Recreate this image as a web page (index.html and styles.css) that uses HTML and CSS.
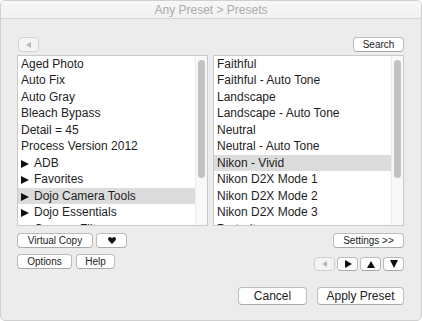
FILE: index.html
```html
<!DOCTYPE html>
<html>
<head>
    <title>Any Preset &gt; Presets</title>
    <link rel="stylesheet" href="styles.css">
</head>
<body>
    <div class="window">
        <div class="titlebar">Any Preset &gt; Presets</div>

        <div class="content">
            <div class="toolbar">
                <button class="btn back-btn disabled"><span class="tri tri-left"></span></button>
                <button class="btn">Search</button>
            </div>

            <div class="lists">
                <div class="list left-list">
                    <div class="items">
                        <div class="row">Aged Photo</div>
                        <div class="row">Auto Fix</div>
                        <div class="row">Auto Gray</div>
                        <div class="row">Bleach Bypass</div>
                        <div class="row">Detail = 45</div>
                        <div class="row">Process Version 2012</div>
                        <div class="row folder"><span class="tri tri-right"></span>ADB</div>
                        <div class="row folder"><span class="tri tri-right"></span>Favorites</div>
                        <div class="row folder selected"><span class="tri tri-right"></span>Dojo Camera Tools</div>
                        <div class="row folder"><span class="tri tri-right"></span>Dojo Essentials</div>
                        <div class="row folder"><span class="tri tri-right"></span>Camera Filters</div>
                    </div>
                    <div class="track"><div class="thumb"></div></div>
                </div>

                <div class="list right-list">
                    <div class="items">
                        <div class="row">Faithful</div>
                        <div class="row">Faithful - Auto Tone</div>
                        <div class="row">Landscape</div>
                        <div class="row">Landscape - Auto Tone</div>
                        <div class="row">Neutral</div>
                        <div class="row">Neutral - Auto Tone</div>
                        <div class="row selected">Nikon - Vivid</div>
                        <div class="row">Nikon D2X Mode 1</div>
                        <div class="row">Nikon D2X Mode 2</div>
                        <div class="row">Nikon D2X Mode 3</div>
                        <div class="row">Portrait</div>
                    </div>
                    <div class="track"><div class="thumb"></div></div>
                </div>
            </div>

            <div class="controls">
                <div class="left-controls">
                    <div class="btn-row">
                        <button class="btn copy-btn">Virtual Copy</button>
                        <button class="btn heart-btn">
                            <svg width="8" height="7" viewBox="0 0 8 7">
                                <path d="M4 7 L0.6 3.4 C-0.4 2.2 0.2 0 1.9 0 C3 0 3.6 0.8 4 1.4 C4.4 0.8 5 0 6.1 0 C7.8 0 8.4 2.2 7.4 3.4 Z" fill="#111"/>
                            </svg>
                        </button>
                    </div>
                    <div class="btn-row">
                        <button class="btn options-btn">Options</button>
                        <button class="btn help-btn">Help</button>
                    </div>
                </div>
                <div class="right-controls">
                    <button class="btn settings-btn">Settings &gt;&gt;</button>
                    <div class="arrows">
                        <button class="btn arrow-btn disabled"><span class="tri tri-left"></span></button>
                        <button class="btn arrow-btn"><span class="tri tri-right small"></span></button>
                        <button class="btn arrow-btn"><span class="tri tri-up"></span></button>
                        <button class="btn arrow-btn"><span class="tri tri-down"></span></button>
                    </div>
                </div>
            </div>

            <div class="footer">
                <button class="btn big-btn cancel-btn">Cancel</button>
                <button class="btn big-btn apply-btn">Apply Preset</button>
            </div>
        </div>
    </div>
</body>
</html>
```

FILE: styles.css
```css
html {
    background-color: #ffffff;
}

body {
    margin: 0;
    font-family: "Liberation Sans", Arial, sans-serif;
    color: #1e1e1e;
}

.window {
    width: 422px;
    height: 321px;
    box-sizing: border-box;
    border: 1px solid #cfcfcf;
    border-radius: 5px;
    background-color: #ececec;
    overflow: hidden;
}

.titlebar {
    height: 17px;
    line-height: 18px;
    text-align: center;
    font-size: 12px;
    color: #ababab;
    background: linear-gradient(#f7f7f7, #f1f1f1);
    border-bottom: 1px solid #d4d4d4;
}

.content {
    padding: 18px 17px 0 16px;
}

/* buttons */

.btn {
    display: inline-flex;
    align-items: center;
    justify-content: center;
    box-sizing: border-box;
    height: 15px;
    padding: 0;
    margin: 0;
    font-family: "Liberation Sans", Arial, sans-serif;
    font-size: 10px;
    color: #222;
    background-color: #ffffff;
    border: 1px solid #bcbcbc;
    border-bottom-color: #a9a9a9;
    border-radius: 4px;
}

.btn.disabled {
    background-color: #f4f4f4;
    border-color: #d2d2d2;
}

.tri {
    display: inline-block;
    width: 0;
    height: 0;
}

.tri-right {
    border-top: 4px solid transparent;
    border-bottom: 4px solid transparent;
    border-left: 8px solid #111;
}

.tri-right.small {
    border-top-width: 4px;
    border-bottom-width: 4px;
    border-left-width: 7px;
    margin-left: 1px;
}

.tri-left {
    border-top: 3px solid transparent;
    border-bottom: 3px solid transparent;
    border-right: 5px solid #b8b8b8;
}

.tri-up {
    border-left: 4px solid transparent;
    border-right: 4px solid transparent;
    border-bottom: 7px solid #111;
}

.tri-down {
    border-left: 4px solid transparent;
    border-right: 4px solid transparent;
    border-top: 8px solid #111;
}

/* top toolbar */

.toolbar {
    display: flex;
    justify-content: space-between;
    margin-left: 1px;
    margin-bottom: 3px;
}

.back-btn {
    width: 21px;
}

.toolbar .btn:last-child {
    width: 51px;
}

/* lists */

.lists {
    display: flex;
    gap: 5px;
    height: 171px;
}

.list {
    display: flex;
    box-sizing: border-box;
    height: 171px;
    background-color: #ffffff;
    border: 1px solid #c9c9c9;
}

.left-list {
    width: 191px;
}

.right-list {
    width: 191px;
}

.items {
    flex: 1;
    overflow: hidden;
    font-size: 12px;
}

.row {
    height: 16.46px;
    line-height: 16.5px;
    padding-left: 3px;
    white-space: nowrap;
}

.row.folder .tri-right {
    margin-right: 5px;
    vertical-align: -1px;
}

.row.selected {
    background-color: #dcdcdc;
}

.track {
    width: 11px;
    background-color: #f8f8f8;
    border-left: 1px solid #ececec;
}

.thumb {
    width: 7px;
    height: 118px;
    margin: 4px 0 0 2px;
    border-radius: 4px;
    background-color: #c2c2c2;
}

/* lower controls */

.controls {
    display: flex;
    justify-content: space-between;
    margin-top: 7px;
}

.left-controls {
    display: flex;
    flex-direction: column;
    gap: 6px;
}

.btn-row {
    display: flex;
    gap: 3px;
}

.copy-btn {
    width: 76px;
}

.heart-btn {
    width: 31px;
}

.options-btn {
    width: 55px;
    margin-right: 1px;
}

.help-btn {
    width: 39px;
}

.right-controls {
    display: flex;
    flex-direction: column;
    align-items: flex-end;
    gap: 9px;
}

.settings-btn {
    width: 71px;
}

.arrows {
    display: flex;
    gap: 2px;
}

.arrow-btn {
    width: 21px;
    height: 14px;
}

.footer {
    display: flex;
    justify-content: flex-end;
    gap: 10px;
    margin-top: 16px;
}

.big-btn {
    height: 18px;
    font-size: 12px;
}

.cancel-btn {
    width: 69px;
}

.apply-btn {
    width: 87px;
}
```
